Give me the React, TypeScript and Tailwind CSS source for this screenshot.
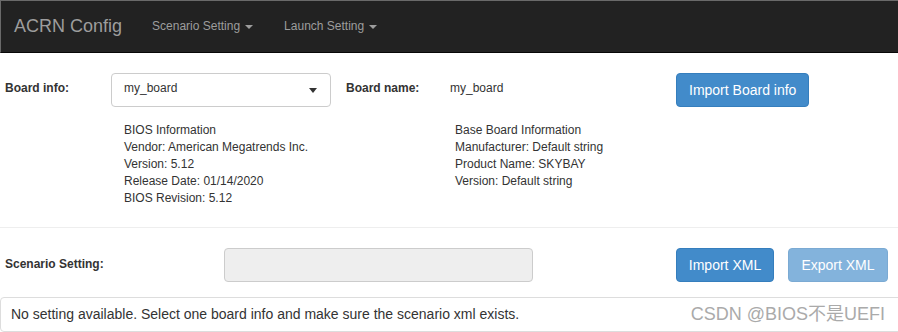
const Caret = () => (
    <span className="ml-[5px] inline-block h-0 w-0 border-x-[4px] border-t-[4px] border-x-transparent border-t-[#9d9d9d] align-middle" />
);

const infoBios = [
    'BIOS Information',
    'Vendor: American Megatrends Inc.',
    'Version: 5.12',
    'Release Date: 01/14/2020',
    'BIOS Revision: 5.12',
];

const infoBoard = [
    'Base Board Information',
    'Manufacturer: Default string',
    'Product Name: SKYBAY',
    'Version: Default string',
];

export default function App() {
    return (
        <div className="h-[332px] w-[898px] overflow-hidden bg-white text-[12px] leading-[17px] text-[#333]" style={{ fontFamily: '"Liberation Sans", Arial, sans-serif' }}>
            {/* navbar */}
            <nav className="flex h-[53px] items-center border-t border-l border-b border-t-[#6a6a6a] border-l-[#6a6a6a] border-b-[#080808] bg-[#222]">
                <span className="ml-[13px] text-[18px] text-[#9d9d9d]">ACRN Config</span>
                <span className="ml-[30px] flex items-center text-[12px] text-[#9d9d9d]">
                    Scenario Setting <Caret />
                </span>
                <span className="ml-[31px] flex items-center text-[12px] text-[#9d9d9d]">
                    Launch Setting <Caret />
                </span>
            </nav>

            {/* board info row */}
            <div className="mt-[20px] flex items-center">
                <span className="w-[111px] -translate-y-[2px] pl-[5px] font-bold">Board info:</span>
                <div className="flex h-[34px] w-[220px] items-center justify-between rounded-[4px] border border-[#ccc] pr-[13px] pl-[12px]">
                    <span className="-translate-y-[2px]">my_board</span>
                    <span className="inline-block h-0 w-0 border-x-[4px] border-t-[5px] border-x-transparent border-t-[#333]" />
                </div>
                <span className="ml-[15px] w-[104px] -translate-y-[2px] font-bold">Board name:</span>
                <span className="w-[226px] -translate-y-[2px]">my_board</span>
                <button className="h-[34px] rounded-[4px] border border-[#357ebd] bg-[#428bca] px-[12px] text-[14px] text-white">
                    Import Board info
                </button>
            </div>

            {/* board details */}
            <div className="mt-[15px] flex">
                <div className="ml-[124px] w-[331px]">
                    {infoBios.map(line => (
                        <div key={line}>{line}</div>
                    ))}
                </div>
                <div>
                    {infoBoard.map(line => (
                        <div key={line}>{line}</div>
                    ))}
                </div>
            </div>

            <div className="mt-[20px] border-t border-[#eee]" />

            {/* scenario row */}
            <div className="mt-[20px] flex items-center">
                <span className="w-[224px] -translate-y-[1px] pl-[5px] font-bold">Scenario Setting:</span>
                <div className="h-[34px] w-[309px] rounded-[4px] border border-[#ccc] bg-[#eee]" />
                <button className="ml-[143px] h-[34px] w-[98px] rounded-[4px] border border-[#357ebd] bg-[#428bca] text-[14px] text-white">
                    Import XML
                </button>
                <button className="ml-[14px] h-[34px] w-[100px] rounded-[4px] border border-[#357ebd] bg-[#428bca] text-[14px] text-white opacity-65">
                    Export XML
                </button>
            </div>

            {/* status panel */}
            <div className="mt-[15px] -mr-[4px] flex h-[35px] items-center justify-between rounded-[4px] border border-[#ddd] pl-[10px] pr-[16px]">
                <span className="text-[14px]">No setting available. Select one board info and make sure the scenario xml exists.</span>
                <span className="text-[18px] text-[#aaa]" style={{ fontFamily: '"Liberation Sans", "Noto Sans CJK SC", sans-serif' }}>CSDN @BIOS不是UEFI</span>
            </div>
        </div>
    );
}
